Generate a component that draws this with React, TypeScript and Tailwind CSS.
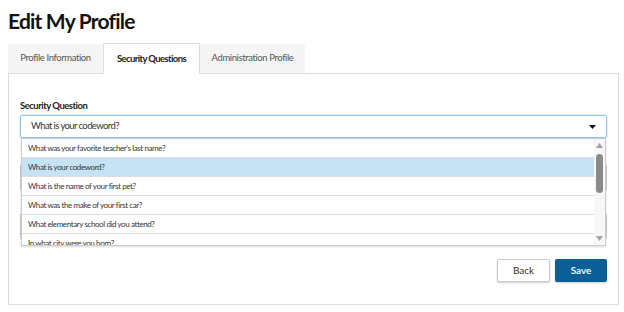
import React from "react";

const items = [
  "What was your favorite teacher's last name?",
  "What is your codeword?",
  "What is the name of your first pet?",
  "What was the make of your first car?",
  "What elementary school did you attend?",
  "In what city were you born?",
];

export default function App() {
  return (
    <div className="w-[624px] h-[312px] bg-white px-2 font-['Lato',sans-serif] text-[#222] overflow-hidden">
      <h1 className="pt-[9px] text-[21px] font-bold leading-[24px] text-[#111] tracking-[-0.8px]">Edit My Profile</h1>
      <div className="mt-[10px] flex h-[30px] items-end">
        <div className="flex h-[29px] w-[95px] items-center justify-center bg-[#f5f5f5] text-[9.5px] tracking-[-0.4px] text-[#555]">
          Profile Information
        </div>
        <div className="relative z-10 -mb-px flex h-[31px] w-[97px] items-center justify-center border border-b-0 border-[#ddd] bg-white text-[9.5px] tracking-[-0.6px] font-bold text-[#222]">
          Security Questions
        </div>
        <div className="flex h-[29px] w-[105px] items-center justify-center bg-[#f5f5f5] text-[9.5px] tracking-[-0.4px] text-[#555]">
          Administration Profile
        </div>
      </div>
      <div className="h-[232px] w-[611px] border border-[#ddd] px-[11px] pt-[26px]">
        <div className="text-[9.5px] font-bold leading-[12px] tracking-[-0.5px] text-[#222]">Security Question</div>
        <div className="relative mt-[3px]">
          <div className="flex h-[23px] items-center justify-between rounded-[2px] border border-[#8cc7ee] pl-[10px] pr-[10px] shadow-[0_0_2px_rgba(80,160,230,0.5)]">
            <span className="text-[9.5px] tracking-[-0.6px] text-[#333]">What is your codeword?</span>
            <svg width="7" height="4" viewBox="0 0 7 4"><path d="M0 0 L7 0 L3.5 4 Z" fill="#111" /></svg>
          </div>
          <div className="mt-[26px] h-[27px] border border-[#ccc] rounded-[2px]" />
          <div className="mt-[22px] h-[26px] border border-[#ccc] rounded-[2px]" />
          <div className="absolute left-px right-px top-[23px] z-20 flex h-[108px] border border-[#ccc] bg-white shadow-[0_1px_2px_rgba(0,0,0,0.15)] overflow-hidden">
            <div className="flex-1 overflow-hidden">
              {items.map((t, i) => (
                <div
                  key={i}
                  className={
                    "flex h-[19px] items-center border-b border-[#ddd] pl-[6px] text-[8px] tracking-[-0.4px] text-[#333] " +
                    (i === 1 ? "bg-[#c6e3f6]" : "bg-white")
                  }
                >
                  {t}
                </div>
              ))}
            </div>
            <div className="relative w-[11px] bg-[#f7f7f7]">
              <svg className="absolute left-[2px] top-[4px]" width="7" height="5" viewBox="0 0 7 5"><path d="M3.5 0 L7 5 L0 5 Z" fill="#a3a3a3" /></svg>
              <div className="absolute left-[2px] top-[15px] h-[39px] w-[7px] rounded-[4px] bg-[#8a8a8a]" />
              <svg className="absolute left-[2px] bottom-[4px]" width="7" height="5" viewBox="0 0 7 5"><path d="M0 0 L7 0 L3.5 5 Z" fill="#a3a3a3" /></svg>
            </div>
          </div>
        </div>
        <div className="mt-[20px] flex justify-end gap-[5px]">
          <button className="h-[23px] w-[53px] rounded-[2px] border border-[#ccc] bg-white text-[10px] text-[#333] shadow-[0_1px_2px_rgba(0,0,0,0.2)]">Back</button>
          <button className="h-[23px] w-[52px] rounded-[2px] bg-[#0b5f97] text-[10px] font-semibold text-white shadow-[0_1px_2px_rgba(0,0,0,0.2)]">Save</button>
        </div>
      </div>
    </div>
  );
}
